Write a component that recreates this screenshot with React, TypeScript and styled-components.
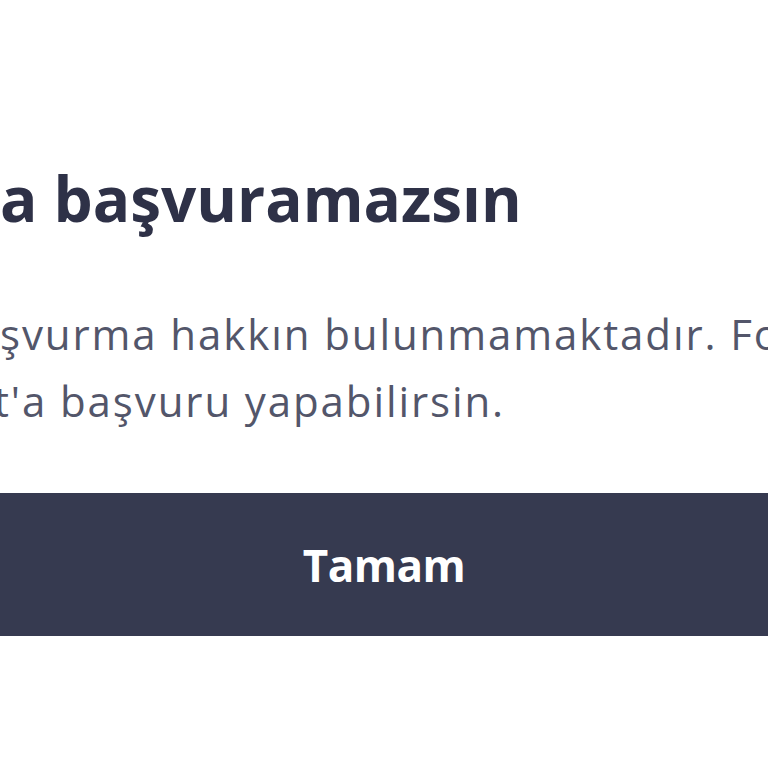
import styled, { createGlobalStyle } from "styled-components";

const GlobalStyle = createGlobalStyle`
  html, body {
    margin: 0;
    padding: 0;
    background: #ffffff;
  }
  body {
    font-family: "Open Sans", "Noto Sans", sans-serif;
    -webkit-font-smoothing: antialiased;
  }
`;

const Sheet = styled.div`
  width: 768px;
  height: 768px;
  overflow: hidden;
  background: #ffffff;
  display: flex;
  flex-direction: column;
`;

const Title = styled.h1`
  margin: 158px 0 0 0;
  padding: 0;
  font-size: 62px;
  line-height: 80px;
  font-weight: 700;
  color: #2e3147;
  white-space: nowrap;
`;

const Message = styled.p`
  margin: 62px 0 0 0;
  padding: 0;
  font-size: 42px;
  line-height: 67px;
  letter-spacing: 1.9px;
  font-weight: 400;
  color: #53566a;
  white-space: nowrap;
`;

type LineProps = {
  $indent: number;
};

const Line = styled.span<LineProps>`
  display: block;
  margin-left: ${(props) => props.$indent}px;
`;

const OkButton = styled.button`
  margin-top: 59px;
  width: 100%;
  height: 143px;
  border: none;
  background: #363a50;
  color: #ffffff;
  font-family: inherit;
  font-size: 44px;
  letter-spacing: -0.5px;
  font-weight: 700;
  cursor: pointer;
`;

const App = () => {
  return (
    <Sheet>
      <GlobalStyle />
      <Title>a başvuramazsın</Title>
      <Message>
        <Line $indent={0}>şvurma hakkın bulunmamaktadır. Fo</Line>
        <Line $indent={-6}>t'a başvuru yapabilirsin.</Line>
      </Message>
      <OkButton>Tamam</OkButton>
    </Sheet>
  );
};

export default App;
